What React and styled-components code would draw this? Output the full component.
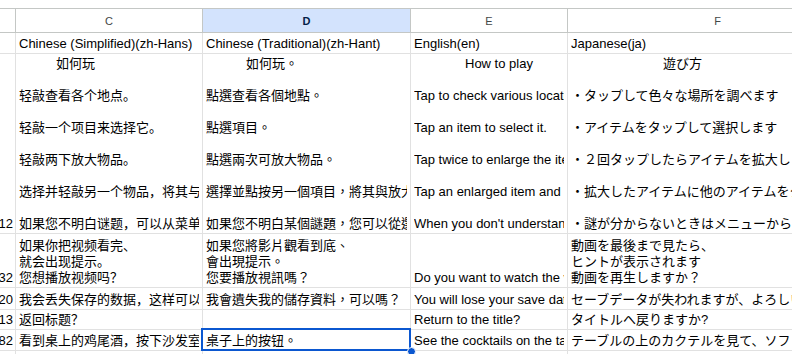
import React from "react";
import styled, { createGlobalStyle } from "styled-components";

const Global = createGlobalStyle`
  html, body { margin: 0; padding: 0; background: #fff; overflow: hidden; }
  body { font-family: "Liberation Sans", Arial, "Noto Sans CJK SC", sans-serif; }
`;

const Page = styled.div`
  width: 792px;
  height: 354px;
  overflow: hidden;
  background: #fff;
`;

const TopStrip = styled.div`
  height: 9px;
  box-sizing: border-box;
  border-bottom: 1px solid #c4c7c5;
`;

const Grid = styled.div`
  display: grid;
  grid-template-columns: 16px 187px 208px 157px 300px;
  grid-template-rows: 24px 21px 180px 54px 22px 20px 21px 21px;
`;

const Head = styled.div`
  box-sizing: border-box;
  border-right: 1px solid #c4c7c5;
  border-bottom: 1px solid #c4c7c5;
  background: ${(p) => (p.$active ? "#d3e3fd" : "#fff")};
  color: ${(p) => (p.$active ? "#041e49" : "#444746")};
  font-weight: ${(p) => (p.$active ? 700 : 400)};
  font-size: 11px;
  display: flex;
  align-items: center;
  justify-content: center;
`;

const fonts = {
  sc: '"Liberation Sans", Arial, "Noto Sans CJK SC", sans-serif',
  tc: '"Liberation Sans", Arial, "Noto Sans CJK TC", sans-serif',
  jp: '"Liberation Sans", Arial, "Noto Sans CJK JP", sans-serif',
};

const Cell = styled.div`
  position: relative;
  box-sizing: border-box;
  border-right: 1px solid #e1e1e1;
  border-bottom: 1px solid #e1e1e1;
  font-family: ${(p) => fonts[p.$lang || "sc"]};
  font-size: 13px;
  line-height: 16px;
  color: #000;
  padding: 0 3px 1px 3px;
  display: flex;
  flex-direction: column;
  justify-content: flex-end;
  overflow: ${(p) => (p.$selected ? "visible" : "hidden")};
  min-width: 0;
`;

const Clip = styled.div`
  overflow: hidden;
  display: flex;
  flex-direction: column;
`;

const NumCell = styled(Cell)`
  flex-direction: row;
  align-items: flex-end;
  justify-content: flex-end;
  padding: 0 2px 1px 0;
  border-right: 1px solid #e1e1e1;
`;

const Line = styled.div`
  height: 16px;
  white-space: nowrap;
  overflow: hidden;
  padding-left: ${(p) => p.$indent || 0}px;
`;

const Selection = styled.div`
  position: absolute;
  left: -2px;
  top: -2px;
  right: -1px;
  bottom: -1px;
  border: 2px solid #0b57d0;
  pointer-events: none;
  z-index: 2;
`;

const Handle = styled.div`
  position: absolute;
  right: -6px;
  bottom: -6px;
  width: 7px;
  height: 7px;
  border-radius: 50%;
  background: #0b57d0;
  border: 1px solid #fff;
  z-index: 3;
`;

const L = (lines, indent) =>
  lines.map((t, i) => (
    <Line key={i} $indent={i === 0 ? indent : 0}>
      {t || "\u00a0"}
    </Line>
  ));

const rows = [
  {
    num: "",
    c: ["Chinese (Simplified)(zh-Hans)"],
    d: ["Chinese (Traditional)(zh-Hant)"],
    e: ["English(en)"],
    f: ["Japanese(ja)"],
  },
  {
    num: "112",
    indent: [37, 40, 51, 92],
    c: ["如何玩", "", "轻敲查看各个地点。", "", "轻敲一个项目来选择它。", "", "轻敲两下放大物品。", "", "选择并轻敲另一个物品，将其与放大的物品组合。", "", "如果您不明白谜题，可以从菜单中查看提示。"],
    d: ["如何玩。", "", "點選查看各個地點。", "", "點選項目。", "", "點選兩次可放大物品。", "", "選擇並點按另一個項目，將其與放大的物品組合。", "", "如果您不明白某個謎題，您可以從選單查看提示。"],
    e: ["How to play", "", "Tap to check various locations.", "", "Tap an item to select it.", "", "Tap twice to enlarge the item.", "", "Tap an enlarged item and another item to combine them.", "", "When you don't understand a puzzle, check the hint from the menu."],
    f: ["遊び方", "", "・タップして色々な場所を調べます", "", "・アイテムをタップして選択します", "", "・２回タップしたらアイテムを拡大します", "", "・拡大したアイテムに他のアイテムをタップすると組み合わせます", "", "・謎が分からないときはメニューからヒントを見ることができます"],
  },
  {
    num: "132",
    c: ["如果你把视频看完、", "就会出现提示。", "您想播放视频吗？"],
    d: ["如果您將影片觀看到底、", "會出現提示。", "您要播放視訊嗎？"],
    e: ["Do you want to watch the video?"],
    f: ["動画を最後まで見たら、", "ヒントが表示されます", "動画を再生しますか？"],
  },
  {
    num: "120",
    c: ["我会丢失保存的数据，这样可以吗？"],
    d: ["我會遺失我的儲存資料，可以嗎？"],
    e: ["You will lose your save data. Is that OK?"],
    f: ["セーブデータが失われますが、よろしいですか？"],
  },
  {
    num: "113",
    c: ["返回标题？"],
    d: [""],
    e: ["Return to the title?"],
    f: ["タイトルへ戻りますか?"],
  },
  {
    num: "182",
    selectD: true,
    c: ["看到桌上的鸡尾酒，按下沙发室的按钮。"],
    d: ["桌子上的按钮。"],
    e: ["See the cocktails on the table and press the button."],
    f: ["テーブルの上のカクテルを見て、ソファの部屋のボタンを押す"],
  },
  { num: "", c: [""], d: [""], e: [""], f: [""] },
];

export default function App() {
  return (
    <Page>
      <Global />
      <TopStrip />
      <Grid>
        <Head />
        <Head>C</Head>
        <Head $active>D</Head>
        <Head>E</Head>
        <Head>F</Head>
        {rows.map((r, i) => {
          const ind = r.indent || [0, 0, 0, 0];
          return (
            <React.Fragment key={i}>
              <NumCell>
                <span>{r.num}</span>
              </NumCell>
              <Cell $lang="sc">{L(r.c, ind[0])}</Cell>
              <Cell $lang="tc" $selected={r.selectD}>
                {r.selectD ? (
                  <>
                    <Clip>{L(r.d, ind[1])}</Clip>
                    <Selection />
                    <Handle />
                  </>
                ) : (
                  L(r.d, ind[1])
                )}
              </Cell>
              <Cell $lang="sc">{L(r.e, ind[2])}</Cell>
              <Cell $lang="jp">{L(r.f, ind[3])}</Cell>
            </React.Fragment>
          );
        })}
      </Grid>
    </Page>
  );
}
